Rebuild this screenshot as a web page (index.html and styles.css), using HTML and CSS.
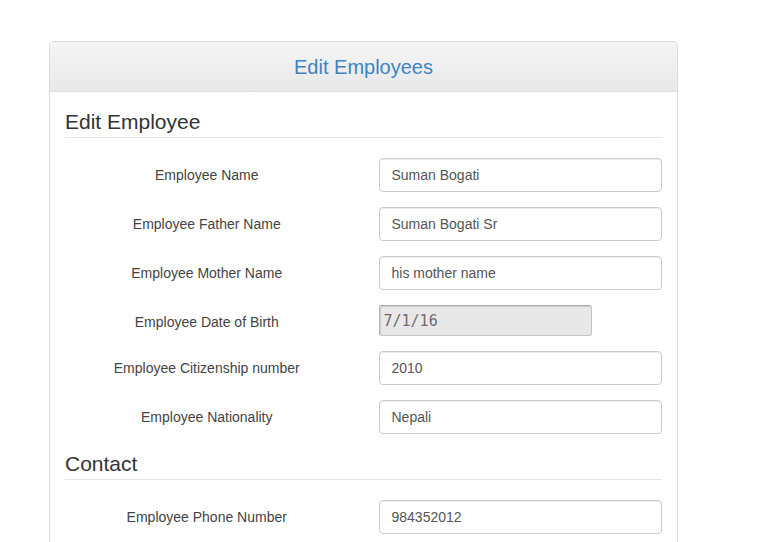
FILE: index.html
```html
<!DOCTYPE html>
<html>
<head>
<meta charset="utf-8">
<link rel="stylesheet" href="styles.css">
</head>
<body>
<div class="panel">
  <div class="panel-heading">Edit Employees</div>
  <div class="panel-body">
    <fieldset>
      <div class="legend">Edit Employee</div>
      <div class="row"><label class="lbl">Employee Name</label><div class="ctl"><input class="inp" value="Suman Bogati"></div></div>
      <div class="row"><label class="lbl">Employee Father Name</label><div class="ctl"><input class="inp" value="Suman Bogati Sr"></div></div>
      <div class="row"><label class="lbl">Employee Mother Name</label><div class="ctl"><input class="inp" value="his mother name"></div></div>
      <div class="row"><label class="lbl">Employee Date of Birth</label><div class="ctl"><input class="date" value="7/1/16" disabled></div></div>
      <div class="row"><label class="lbl">Employee Citizenship number</label><div class="ctl"><input class="inp" value="2010"></div></div>
      <div class="row"><label class="lbl">Employee Nationality</label><div class="ctl"><input class="inp" value="Nepali"></div></div>
    </fieldset>
    <fieldset>
      <div class="legend">Contact</div>
      <div class="row"><label class="lbl">Employee Phone Number</label><div class="ctl"><input class="inp" value="984352012"></div></div>
    </fieldset>
  </div>
</div>
</body>
</html>
```
FILE: styles.css
```css
html, body {
  margin: 0;
  padding: 0;
  background: #fff;
  font-family: "Liberation Sans", Arial, sans-serif;
  font-size: 14px;
  color: #333;
  overflow: hidden;
}
.panel {
  box-sizing: border-box;
  width: 629px;
  margin: 41px 0 0 49px;
  border: 1px solid #ddd;
  border-radius: 4px;
  background: #fff;
  box-shadow: 0 1px 1px rgba(0,0,0,0.05);
}
.panel-heading {
  height: 50px;
  box-sizing: border-box;
  border-bottom: 1px solid #ddd;
  border-radius: 3px 3px 0 0;
  background: linear-gradient(to bottom, #f5f5f5 0%, #e8e8e8 100%);
  color: #3c84c4;
  font-size: 20px;
  text-align: center;
  line-height: 50px;
}
.panel-body {
  padding: 15px;
}
fieldset {
  margin: 0;
  padding: 0;
  border: 0;
  min-width: 0;
}
.legend {
  font-size: 21px;
  line-height: 30px;
  color: #333;
  border-bottom: 1px solid #e5e5e5;
  margin-bottom: 20px;
}
.row {
  display: flex;
  margin: 0 -15px 15px;
}
.lbl {
  box-sizing: border-box;
  width: 50%;
  padding: 7px 15px 0;
  text-align: center;
  color: #444;
  line-height: 20px;
}
.ctl {
  box-sizing: border-box;
  width: 50%;
  padding: 0 15px;
}
.inp {
  display: block;
  box-sizing: border-box;
  width: 100%;
  height: 34px;
  padding: 6px 12px;
  font-family: "Liberation Sans", Arial, sans-serif;
  font-size: 14px;
  color: #555;
  background: #fff;
  border: 1px solid #ccc;
  border-radius: 4px;
  box-shadow: inset 0 1px 1px rgba(0,0,0,0.075);
  outline: none;
}
.date {
  display: block;
  box-sizing: border-box;
  width: 213px;
  height: 31px;
  padding: 2px 4px;
  font-family: "DejaVu Sans Mono", "Liberation Mono", monospace;
  font-size: 15px;
  color: #6d6d6d;
  background: #e8e8e8;
  border: 1px solid #c4c4c4;
  border-top-color: #a8a8a8;
  border-left-color: #b4b4b4;
  border-radius: 3px;
  box-shadow: inset 1px 1px 1px rgba(0,0,0,0.12);
  -webkit-text-fill-color: #6d6d6d;
  opacity: 1;
}
```
